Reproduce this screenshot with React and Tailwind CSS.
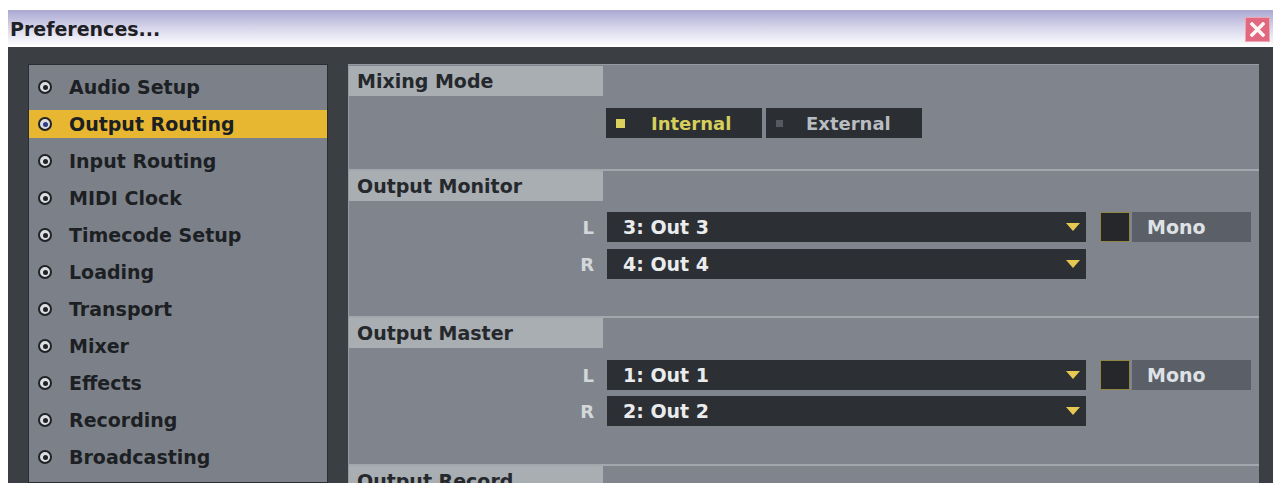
import React from "react";

const font = { fontFamily: '"DejaVu Sans", "Liberation Sans", sans-serif' };

const sidebarItems = [
  "Audio Setup",
  "Output Routing",
  "Input Routing",
  "MIDI Clock",
  "Timecode Setup",
  "Loading",
  "Transport",
  "Mixer",
  "Effects",
  "Recording",
  "Broadcasting",
  "",
];

const Bullet = ({ active }) => (
  <span className="w-[14px] h-[14px] rounded-full border-2 border-[#1f2226] bg-[#dcdee2] flex items-center justify-center shrink-0">
    <span className={"w-[5px] h-[5px] rounded-full " + (active ? "bg-[#2e3d86]" : "bg-[#1f2226]")} />
  </span>
);

const SectionHeader = ({ children }) => (
  <div className="h-[30px] w-[254px] bg-[#a9aeb3] flex items-center pl-[8px] text-[19px] font-bold text-[#25282c]">
    {children}
  </div>
);

const Arrow = () => (
  <svg width="14" height="8" viewBox="0 0 14 8">
    <path d="M0 0 L14 0 L7 8 Z" fill="#e6c952" />
  </svg>
);

const Dropdown = ({ label, value, mono }) => (
  <div className="flex items-center h-[30px]">
    <div className="w-[258px] pr-[13px] text-right text-[18px] font-bold text-[#d4d7da]">{label}</div>
    <div className="w-[479px] h-[30px] bg-[#2c2f33] flex items-center justify-between pl-[16px] pr-[6px]">
      <span className="text-[19px] font-bold text-[#e9ebed]">{value}</span>
      <Arrow />
    </div>
    {mono && (
      <div className="flex items-center ml-[14px] gap-[2px]">
        <div className="w-[30px] h-[30px] bg-[#26272a] border border-[#8f8544]" />
        <div className="w-[119px] h-[30px] bg-[#5b6068] flex items-center pl-[15px] text-[19px] font-bold text-[#dfe2e5]">
          Mono
        </div>
      </div>
    )}
  </div>
);

export default function App() {
  return (
    <div className="w-[1273px] h-[485px] bg-white overflow-hidden flex flex-col" style={font}>
      <div className="h-[10px] shrink-0" />
      {/* title bar */}
      <div className="ml-[8px] h-[35px] shrink-0 bg-gradient-to-b from-[#aba8d3] via-[#d6d5ea] to-[#fbfbfd] flex items-center justify-between pl-[2px] pr-[3px] pt-[4px]">
        <span className="text-[19px] font-bold text-[#1d2024]">Preferences...</span>
        <div className="w-[25px] h-[25px] bg-[#e0687f] border border-[#f0a5b5] flex items-center justify-center">
          <svg width="15" height="15" viewBox="0 0 15 15">
            <path d="M2 2 L13 13 M13 2 L2 13" stroke="#fff4f6" strokeWidth="3.5" strokeLinecap="square" />
          </svg>
        </div>
      </div>
      <div className="h-[2px] shrink-0" />
      {/* frame */}
      <div className="ml-[8px] h-[436px] shrink-0 bg-[#3b3e42] pt-[17px] pl-[20px] pr-[14px] flex gap-[20px] overflow-hidden">
        {/* sidebar */}
        <div className="w-[300px] shrink-0 bg-[#7c8189] border border-[#2a2d31] pt-[8px] flex flex-col">
          {sidebarItems.map((item, i) => (
            <div
              key={i}
              className={
                "h-[28px] mb-[9px] shrink-0 flex items-center gap-[17px] pl-[9px] text-[19px] font-bold text-[#1c1f23] " +
                (i === 1 ? "bg-[#e8b731]" : "")
              }
            >
              <Bullet active={i === 1} />
              {item && <span>{item}</span>}
            </div>
          ))}
        </div>

        {/* main panel */}
        <div className="flex-1 bg-[#80858d] border-t border-l border-[#969ba1] flex flex-col">
          {/* Mixing Mode */}
          <div className="h-[106px] shrink-0 pt-[1px] border-b-2 border-[#a2a7ad]">
            <SectionHeader>Mixing Mode</SectionHeader>
            <div className="flex mt-[12px] ml-[257px] gap-[4px]">
              <div className="w-[156px] h-[30px] bg-[#2b2e33] flex items-center pl-[10px] gap-[26px]">
                <span className="w-[9px] h-[9px] bg-[#dcd15c]" />
                <span className="text-[18px] font-bold text-[#d6cf5c]">Internal</span>
              </div>
              <div className="w-[156px] h-[30px] bg-[#2b2e33] flex items-center pl-[10px] gap-[23px]">
                <span className="w-[7px] h-[7px] bg-[#565a60]" />
                <span className="text-[18px] font-bold text-[#b9bdc1]">External</span>
              </div>
            </div>
          </div>

          {/* Output Monitor */}
          <div className="h-[147px] shrink-0 border-b-2 border-[#a2a7ad]">
            <SectionHeader>Output Monitor</SectionHeader>
            <div className="mt-[11px] flex flex-col gap-[7px]">
              <Dropdown label="L" value="3: Out 3" mono />
              <Dropdown label="R" value="4: Out 4" />
            </div>
          </div>

          {/* Output Master */}
          <div className="h-[148px] shrink-0 border-b-2 border-[#a2a7ad]">
            <SectionHeader>Output Master</SectionHeader>
            <div className="mt-[12px] flex flex-col gap-[6px]">
              <Dropdown label="L" value="1: Out 1" mono />
              <Dropdown label="R" value="2: Out 2" />
            </div>
          </div>

          {/* Output Record */}
          <div className="shrink-0">
            <SectionHeader>Output Record</SectionHeader>
          </div>
        </div>
      </div>
    </div>
  );
}
